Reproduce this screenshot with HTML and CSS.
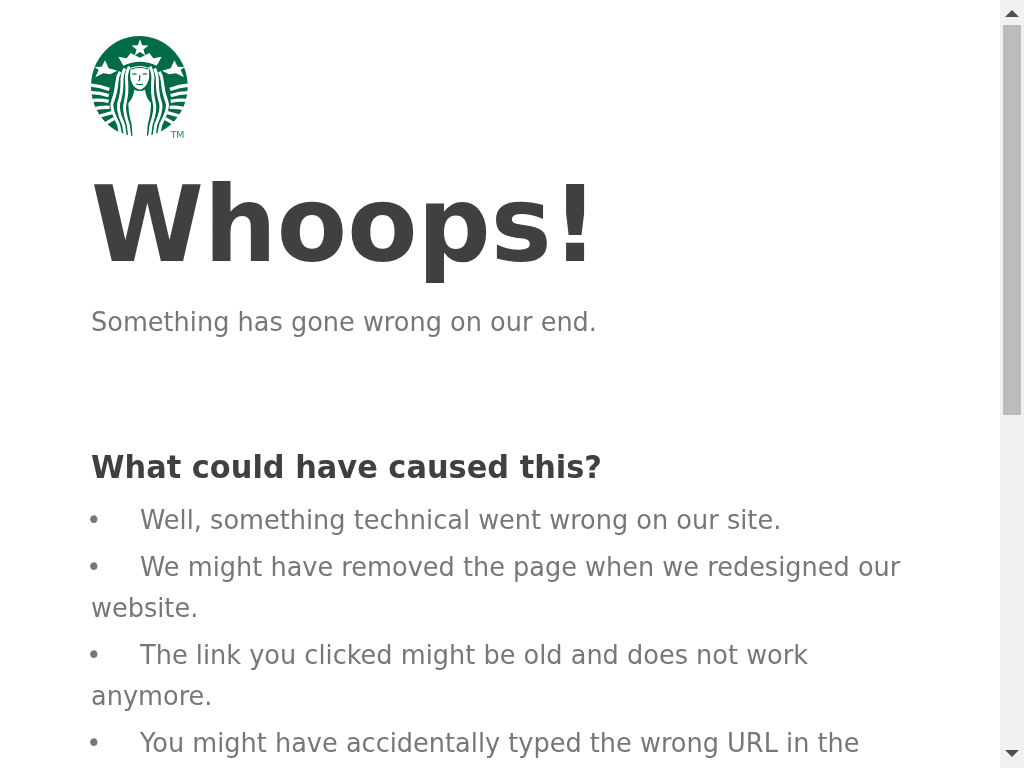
FILE: index.html
```html
<!DOCTYPE html>
<html lang="en">
<head>
  <meta charset="UTF-8">
  <title>Whoops!</title>
  <link rel="stylesheet" href="styles.css">
</head>
<body>
  <main class="page">
    <svg class="logo" viewBox="33 33 300 312" width="100" height="104" aria-label="Starbucks">
      <defs>
        <g id="half">
          <!-- side star -->
          <path fill="#fff" d="M75 106l11 24 26 7-22 11-20-3-24 12 10-22-12-9 21-1z"/>
          <!-- tail scales -->
          <path fill="none" stroke="#fff" stroke-width="10" d="M30 180q30 2 58 13M32 203q28 0 54 9M38 226q26-2 48 3M47 250q22-4 42-3M60 273q18-5 36-10M76 296q14-8 26-15"/>
          <!-- hair waves -->
          <g fill="none" stroke="#fff" stroke-width="9">
            <path d="M148 125c-8 15-10 30-8 45 2 25 0 45-5 65-5 20 3 45 10 65l5 40"/>
            <path d="M134 130c-6 15-9 28-8 40 0 25-3 45-10 65-5 23 7 45 15 65l5 35"/>
            <path d="M120 140c-6 10-9 20-9 30-2 25-7 45-15 65-4 23 12 45 20 65l5 25"/>
          </g>
        </g>
      </defs>
      <ellipse cx="178" cy="184" rx="145" ry="151" fill="#006b47"/>
      <!-- star and crown -->
      <path fill="#fff" d="M180 43l6.500 18 19.200.6-15.200 11.800 5.400 18.400-15.900-10.800-15.900 10.800 5.400-18.400-15.200-11.800 19.200-.6z"/>
      <path fill="#fff" d="M115 95l25 5 12-16 28 14 28-14 12 16 25-5-15 27q-50-24-100 0z"/>
      <use href="#half"/>
      <use href="#half" transform="matrix(-1 0 0 1 358 0)"/>
      <!-- face -->
      <path fill="#fff" d="M152 128q27-10 54 0 4 30-2 42-8 20-25 24-17-4-25-24-6-12-2-42z"/>
      <path fill="none" stroke="#006b47" stroke-width="3.500" d="M154 132q25-9 50 0"/>
      <path fill="none" stroke="#006b47" stroke-width="3.500" d="M157 148q6-3 13 0M188 148q7-3 13 0M179 150v14l-4 3M169 177q10 4 20 0"/>
      <!-- body -->
      <path fill="#fff" d="M163 194q16 8 32 0 2 22 18 41 0 30-10 65l-3 40h-42l-3-40q-10-35-10-65 16-19 18-41z"/>
      <text class="logo-tm" x="272" y="338">TM</text>
    </svg>

    <div class="copy">
      <h1 class="title">Whoops!</h1>
      <p class="lead">Something has gone wrong on our end.</p>

      <h2 class="subtitle">What could have caused this?</h2>
      <ul class="reasons">
        <li>Well, something technical went wrong on our site.</li>
        <li>We might have removed the page when we redesigned our website.</li>
        <li>The link you clicked might be old and does not work anymore.</li>
        <li>You might have accidentally typed the wrong URL in the</li>
      </ul>
    </div>
  </main>

  <div class="scrollbar">
    <span class="arrow arrow-up"></span>
    <div class="scroll-thumb"></div>
    <span class="arrow arrow-down"></span>
  </div>
</body>
</html>
```

FILE: styles.css
```css
html {
  overflow: hidden;
}
body {
  margin: 0;
  background: #fff;
  color: #777;
  font-family: "DejaVu Sans", sans-serif;
}
.page {
  padding: 36px 0 0 91px;
}
.logo {
  display: block;
  filter: blur(.3px);
}
.logo-tm {
  fill: #2f8468;
  font-size: 28px;
}
/* the letters in the shot are a little narrow and tall */
.copy {
  width: 841px;
  transform: scaleX(.975);
  transform-origin: 0 0;
}
.title {
  margin: 35px 0 0 0;
  color: #404040;
  font-size: 105px;
  line-height: 100px;
  font-weight: bold;
}
.lead {
  margin: 27px 0 0 0;
  font-size: 26.25px;
  line-height: 41px;
}
.subtitle {
  margin: 101px 0 0 0;
  color: #404040;
  font-size: 31.2px;
  line-height: 46px;
  font-weight: bold;
}
.reasons {
  margin: 0;
  padding: 0;
  list-style: none;
  font-size: 26.25px;
  line-height: 41px;
}
.reasons li {
  margin-top: 10px;
}
.reasons li + li {
  margin-top: 6px;
}
.reasons li::before {
  content: "•";
  display: inline-block;
  width: 55.300px;
  margin-left: -5px;
}
/* drawn scrollbar, sits over the page */
.scrollbar {
  position: fixed;
  top: 0;
  right: 0;
  bottom: 0;
  width: 24px;
  display: flex;
  flex-direction: column;
  align-items: center;
  background: #f1f1f1;
}
.scroll-thumb {
  width: 18px;
  height: 390px;
  margin-top: 8px;
  background: #bcbcbc;
}
.arrow {
  width: 0;
  height: 0;
  border-left: 7px solid transparent;
  border-right: 7px solid transparent;
}
.arrow-up {
  margin-top: 10px;
  border-bottom: 7px solid #505050;
}
.arrow-down {
  margin-top: auto;
  margin-bottom: 11px;
  border-top: 7px solid #505050;
}
```
